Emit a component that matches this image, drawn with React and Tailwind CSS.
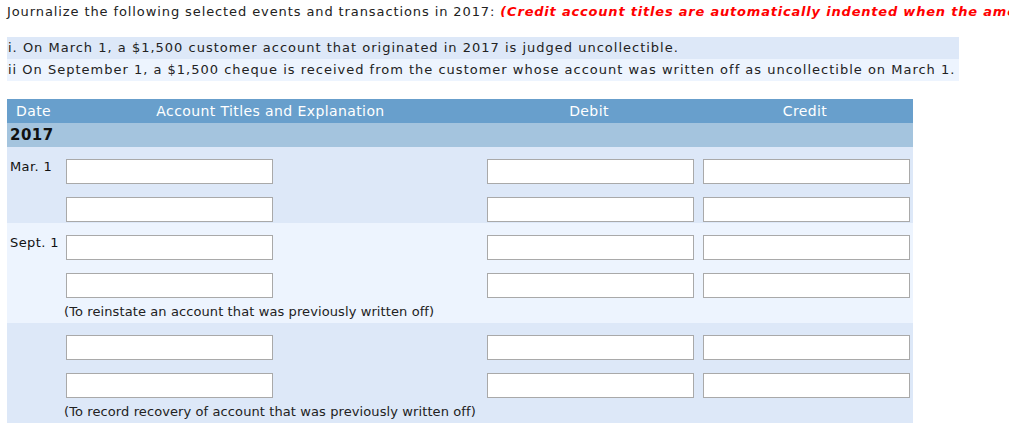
const VERDANA = { fontFamily: '"DejaVu Sans", Verdana, sans-serif' };

// one line of entry inputs: date label, account title, debit, credit
function EntryRow({ date }) {
  return (
    <div className="grid grid-cols-[53px_421px_216px_216px] h-[38px] pt-[12px]">
      <div className="pl-[3px] text-[13px] leading-[16px] text-[#111] tracking-[0.4px]">{date}</div>
      <div className="pl-[6px]">
        <input className="block w-[207px] h-[25px] border border-[#a9a9a9] bg-white outline-none" />
      </div>
      <div className="pl-[6px]">
        <input className="block w-[207px] h-[25px] border border-[#a9a9a9] bg-white outline-none" />
      </div>
      <div className="pl-[6px]">
        <input className="block w-[207px] h-[25px] border border-[#a9a9a9] bg-white outline-none" />
      </div>
    </div>
  );
}

function Note({ children }) {
  return (
    <div className="h-[24px] pl-[57px] pt-[4px] text-[13px] leading-[18px] text-[#222] tracking-[0.1px]">
      {children}
    </div>
  );
}

export default function App() {
  return (
    <div className="w-[1009px] h-[438px] overflow-hidden bg-white text-black" style={VERDANA}>
      {/* instructions */}
      <div className="pl-[7px] pt-[3px] h-[37px] whitespace-nowrap text-[13px] leading-[18px] text-[#222] tracking-[0.9px]">
        Journalize the following selected events and transactions in 2017:{" "}
        <span className="text-[#ff0000] font-bold italic tracking-[0.8px]">
          (Credit account titles are automatically indented when the amount is entered. Do not indent manually.)
        </span>
      </div>

      <div className="ml-[7px] w-[952px] text-[13px] text-[#222] whitespace-nowrap tracking-[1px]">
        <div className="h-[22px] leading-[22px] pl-[1px] bg-[#dde8f8]">
          i. On March 1, a $1,500 customer account that originated in 2017 is judged uncollectible.
        </div>
        <div className="h-[22px] leading-[22px] pl-[1px] bg-[#edf4fe]">
          ii On September 1, a $1,500 cheque is received from the customer whose account was written off as uncollectible on March 1.
        </div>
      </div>

      {/* journal table */}
      <div className="ml-[7px] mt-[18px] w-[906px]">
        <div className="grid grid-cols-[53px_421px_216px_216px] h-[24px] bg-[#689fcc] text-white text-[14px] leading-[24px] text-center tracking-[0.4px]">
          <div>Date</div>
          <div>Account Titles and Explanation</div>
          <div>Debit</div>
          <div>Credit</div>
        </div>
        <div className="h-[24px] bg-[#a4c4de] pl-[3px] text-[15px] leading-[24px] font-bold text-[#111] tracking-[0.5px]">2017</div>

        <div className="bg-[#dde8f8] h-[76px]">
          <EntryRow date="Mar. 1" />
          <EntryRow date="" />
        </div>

        <div className="bg-[#edf4fe] h-[100px]">
          <EntryRow date="Sept. 1" />
          <EntryRow date="" />
          <Note>(To reinstate an account that was previously written off)</Note>
        </div>

        <div className="bg-[#dde8f8] h-[100px]">
          <EntryRow date="" />
          <EntryRow date="" />
          <Note>(To record recovery of account that was previously written off)</Note>
        </div>
      </div>
    </div>
  );
}
